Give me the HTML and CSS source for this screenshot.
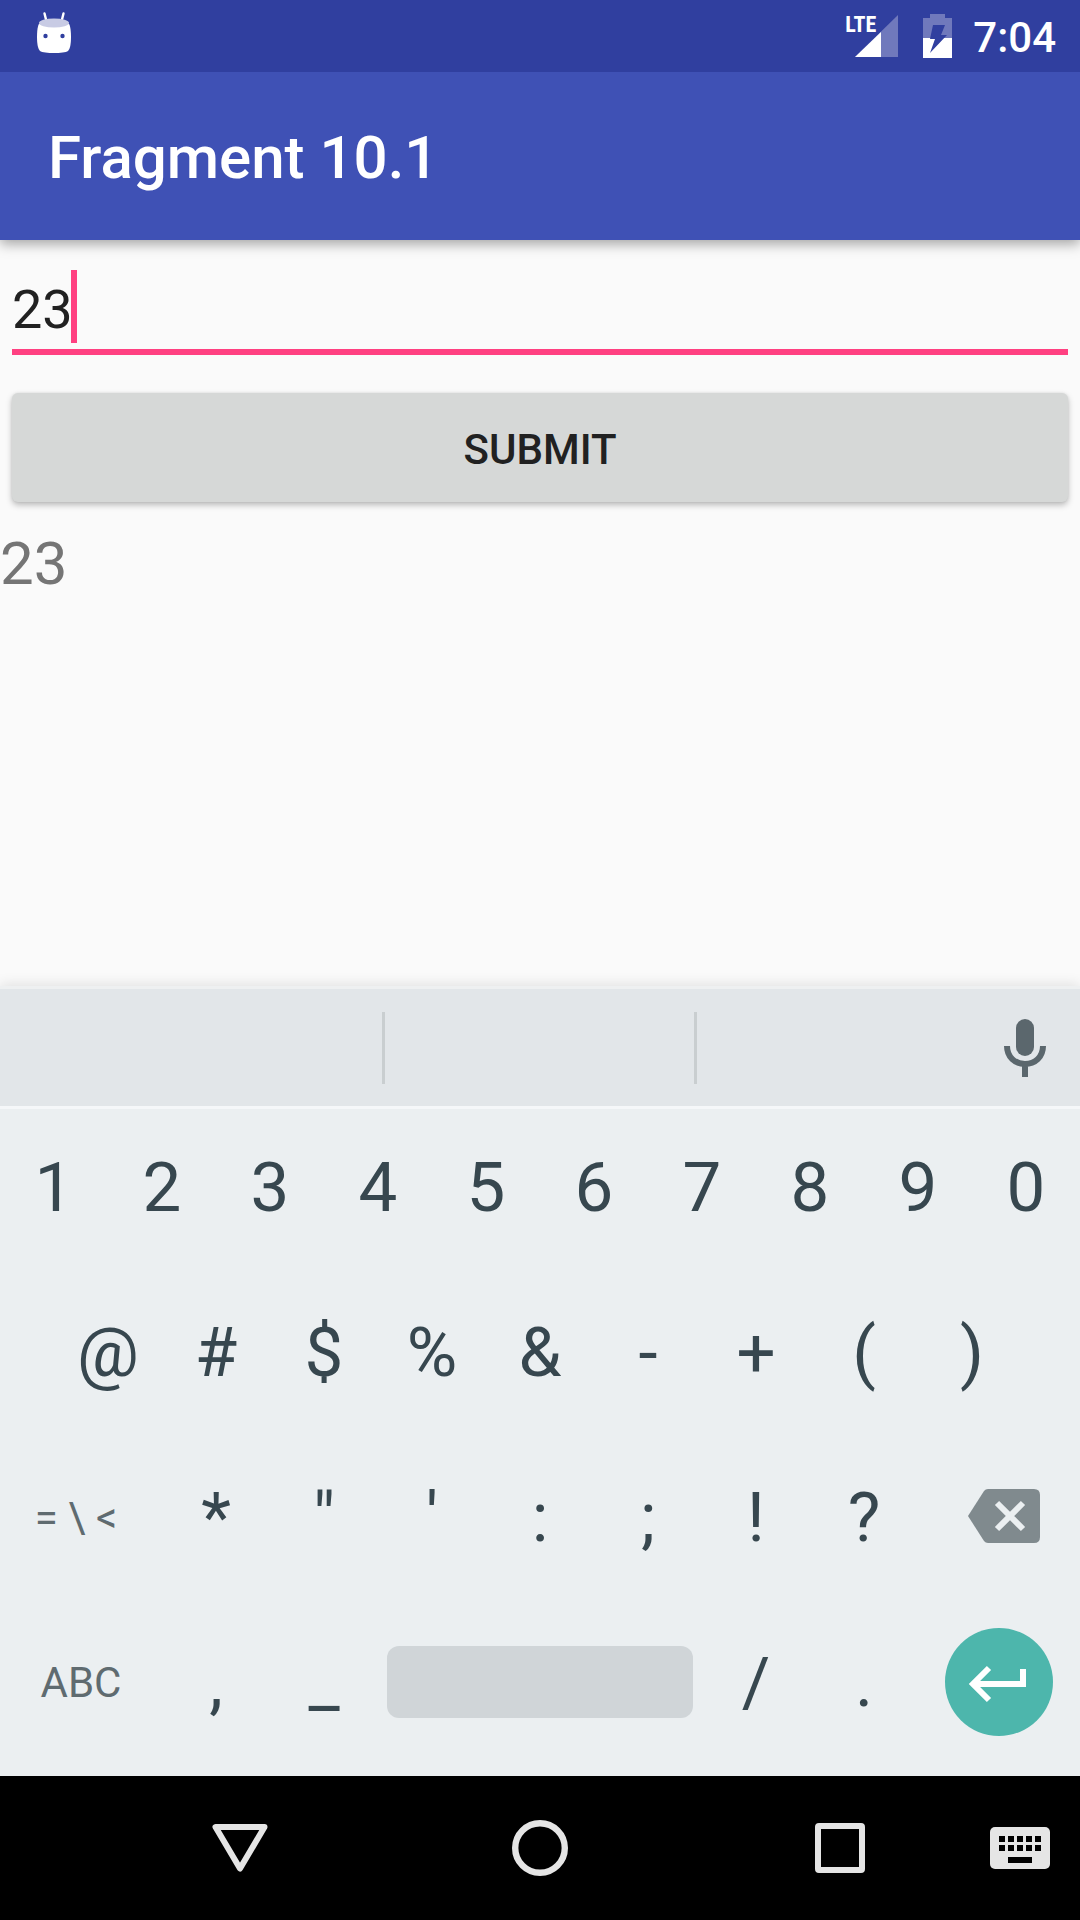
FILE: index.html
```html
<!DOCTYPE html>
<html lang="en">
<head>
<meta charset="utf-8">
<meta name="viewport" content="width=device-width">
<title>Fragment 10.1</title>
<link rel="stylesheet" href="styles.css">
</head>
<body>
<div class="screen">
  <div class="status-bar">
    <svg class="status-app" width="34" height="42" viewBox="0 0 34 42" aria-hidden="true">
      <path d="M7.500 1.500l2 8M26.500 1.500l-2 8" stroke="#fff" stroke-width="2.400" stroke-linecap="round"/>
      <path d="M2 12C1 13 0 18 0 25s1 12 3 14c2 1.500 8 2 14 2s12-.5 14-2c2-2 3-7 3-14s-1-12-2-13z" fill="#fff"/>
      <ellipse cx="17" cy="11" rx="15" ry="4.500" fill="#c8cbe4"/>
      <circle cx="8.500" cy="24" r="2.200" fill="#303f9f"/>
      <circle cx="25.500" cy="24" r="2.200" fill="#303f9f"/>
    </svg>
    <div class="status-icons">
      <div class="signal">
        <span class="signal-type">LTE</span>
        <svg width="54" height="44" viewBox="0 0 54 44" aria-hidden="true">
          <path d="M53 1v42H10z" fill="#7079bc"/>
          <path d="M36 18v25H10z" fill="#fff"/>
        </svg>
      </div>
      <svg width="29" height="44" viewBox="0 0 29 44" aria-hidden="true">
        <path d="M7 0h15v4h7v20H0V4h7z" fill="#7079bc"/>
        <path d="M0 24h29v20H0z" fill="#fff"/>
        <path d="M10 11h12l-4 10h6L7 39l5-14H7z" fill="#303f9f"/>
      </svg>
      <time class="clock">7:04</time>
    </div>
  </div>

  <header class="app-bar"><h1 class="app-title">Fragment 10.1</h1></header>

  <main class="content">
    <div class="field">
      <input class="field-input" type="text" value="23" aria-label="Value">
      <span class="field-cursor"></span>
    </div>
    <button class="submit" type="button">SUBMIT</button>
    <p class="result">23</p>
  </main>

  <section class="keyboard" aria-label="Keyboard">
    <div class="suggestions">
      <span class="suggestion suggestion-first"></span>
      <span class="suggestion suggestion-middle"></span>
      <button class="mic" type="button" aria-label="Voice input">
        <svg width="42" height="58" viewBox="0 0 42 58" aria-hidden="true">
          <rect x="12" y="0" width="18" height="37" rx="9" fill="#5b676d"/>
          <path d="M3 27c0 11 8 18 18 18s18-7 18-18M21 45v13" fill="none" stroke="#5b676d" stroke-width="6"/>
        </svg>
      </button>
    </div>
    <div class="keys">
      <div class="key-row">
        <button class="key">1</button><button class="key">2</button><button class="key">3</button><button class="key">4</button><button class="key">5</button><button class="key">6</button><button class="key">7</button><button class="key">8</button><button class="key">9</button><button class="key">0</button>
      </div>
      <div class="key-row key-row-inset">
        <button class="key">@</button><button class="key">#</button><button class="key">$</button><button class="key">%</button><button class="key">&amp;</button><button class="key">-</button><button class="key">+</button><button class="key">(</button><button class="key">)</button>
      </div>
      <div class="key-row">
        <button class="key key-wide key-label"><span class="key-symbols">= \ &lt;</span></button><button class="key">*</button><button class="key">"</button><button class="key">'</button><button class="key">:</button><button class="key">;</button><button class="key">!</button><button class="key">?</button>
        <button class="key key-wide" aria-label="Backspace">
          <svg width="82" height="56" viewBox="0 0 82 56" aria-hidden="true">
            <path d="M30 0h46q6 0 6 6v42q0 6-6 6H30q-2.500 0-4-2L10 27 26 2q1.500-2 4-2z" fill="#808a8e"/>
            <path d="M39 14l26 26M65 14L39 40" stroke="#ebeff1" stroke-width="6"/>
          </svg>
        </button>
      </div>
      <div class="key-row">
        <button class="key key-wide key-label">ABC</button><button class="key">,</button><button class="key">_</button>
        <button class="key key-space" aria-label="Space"><span class="space-bar"></span></button>
        <button class="key">/</button><button class="key">.</button>
        <button class="key key-wide" aria-label="Enter">
          <svg width="108" height="108" viewBox="0 0 108 108" aria-hidden="true">
            <circle cx="54" cy="54" r="54" fill="#4db6ac"/>
            <path d="M78 41v15H30M44 40L28 56l16 16" fill="none" stroke="#fff" stroke-width="6"/>
          </svg>
        </button>
      </div>
    </div>
  </section>

  <nav class="nav-bar" aria-label="System">
    <button class="nav-button" aria-label="Back">
      <svg width="56" height="56" viewBox="0 0 56 56" aria-hidden="true"><path d="M3.500 7h49L28 48.500z" fill="none" stroke="#e5e5e5" stroke-width="6" stroke-linejoin="round"/></svg>
    </button>
    <button class="nav-button" aria-label="Home">
      <svg width="56" height="56" viewBox="0 0 56 56" aria-hidden="true"><circle cx="28" cy="28" r="24.800" fill="none" stroke="#e5e5e5" stroke-width="6.400"/></svg>
    </button>
    <button class="nav-button" aria-label="Recent apps">
      <svg width="56" height="56" viewBox="0 0 56 56" aria-hidden="true"><rect x="6" y="6" width="44" height="44" rx="1" fill="none" stroke="#e5e5e5" stroke-width="6" stroke-linejoin="round"/></svg>
    </button>
    <button class="nav-keyboard" aria-label="Choose keyboard">
      <svg width="60" height="42" viewBox="0 0 60 42" aria-hidden="true">
        <rect width="60" height="42" rx="5" fill="#e5e5e5"/>
        <path d="M9 12h42M9 21h42" stroke="#000" stroke-width="6" stroke-dasharray="6 3"/>
        <path d="M18 33h24" stroke="#000" stroke-width="6"/>
      </svg>
    </button>
  </nav>
</div>
</body>
</html>
```
FILE: styles.css
```css
* {
  box-sizing: border-box;
}

body {
  margin: 0;
  background: #fafafa;
  color: #212121;
  font-family: Roboto, "Noto Sans", sans-serif;
}

button {
  padding: 0;
  border: 0;
  background: none;
  color: inherit;
  font: inherit;
}

svg {
  display: block;
}

.screen {
  display: flex;
  flex-direction: column;
  min-height: 100vh;
}

.status-bar {
  position: relative;
  z-index: 1;
  display: flex;
  justify-content: space-between;
  align-items: flex-start;
  height: 72px;
  padding: 12px 24px 0 37px;
  background: #303f9f;
  color: #fff;
}

.status-icons {
  display: flex;
  align-items: flex-start;
  padding-top: 2px;
}

.signal {
  position: relative;
  margin-right: 24px;
}

.signal-type {
  position: absolute;
  top: 0;
  left: 0;
  font: bold 22px/22px "Roboto Condensed", "Liberation Sans Narrow", "Liberation Sans", sans-serif;
}

.clock {
  margin-left: 21px;
  font-size: 42px;
  line-height: 48px;
  font-weight: 500;
}

.app-bar {
  display: flex;
  align-items: center;
  height: 168px;
  padding: 4px 48px 0;
  background: #3f51b5;
  color: #fff;
  box-shadow: 0 4px 12px rgba(0, 0, 0, 0.35);
}

.app-title {
  margin: 0;
  font-size: 60px;
  line-height: 72px;
  font-weight: 500;
}

.content {
  display: flex;
  flex: 1;
  flex-direction: column;
  padding-top: 30px;
}

.field {
  position: relative;
  margin: 0 12px 38px;
}

.field-input {
  display: block;
  width: 100%;
  height: 85px;
  padding: 0;
  border: 0;
  border-bottom: 6px solid #ff4081;
  border-radius: 0;
  outline: 0;
  background: none;
  color: #212121;
  caret-color: transparent;
  font: inherit;
  font-size: 54px;
}

.field-cursor {
  position: absolute;
  top: 0;
  left: 59px;
  width: 6px;
  height: 73px;
  background: #ff4081;
}

.submit {
  height: 109px;
  margin: 0 12px;
  padding-top: 4px;
  border-radius: 6px;
  background: #d6d8d7;
  box-shadow: 0 3px 6px rgba(0, 0, 0, 0.26), 0 0 3px rgba(0, 0, 0, 0.08);
  font-size: 42px;
  font-weight: 500;
}

.result {
  margin: 26px 0 0;
  color: #757575;
  font-size: 60px;
  line-height: 72px;
}

.keyboard {
  background: #ebeff1;
  box-shadow: 0 -2px 12px rgba(0, 0, 0, 0.1);
}

.suggestions {
  display: flex;
  align-items: center;
  height: 123px;
  padding-right: 34px;
  border-top: 3px solid #eef0f1;
  border-bottom: 3px solid #f5f7f9;
  background: #e2e6e9;
}

.suggestion {
  height: 72px;
  border-right: 3px solid #c9ced0;
}

.suggestion-first {
  flex: 0 0 385px;
}

.suggestion-middle {
  flex: 0 0 312px;
}

.mic {
  margin-left: auto;
}

.keys {
  display: flex;
  flex-direction: column;
  gap: 15px;
  padding: 3px 0 19px;
  color: #37474f;
}

.key-row {
  display: flex;
  height: 150px;
}

.key-row-inset {
  padding: 0 5%;
}

.key {
  display: flex;
  flex: 2 1 0;
  align-items: center;
  justify-content: center;
  font-size: 69px;
}

.key-wide {
  flex-grow: 3;
}

.key-space {
  flex-grow: 6;
}

.key-label {
  color: #5f6b70;
  font-size: 42px;
}

.key-symbols {
  padding-right: 10px;
}

.space-bar {
  flex: 1;
  height: 72px;
  margin: 0 9px;
  border-radius: 12px;
  background: #d0d5d8;
}

.nav-bar {
  display: flex;
  align-items: center;
  height: 144px;
  padding: 0 30px 0 90px;
  background: #000;
}

.nav-button {
  display: flex;
  flex: 1;
  justify-content: center;
}
```
